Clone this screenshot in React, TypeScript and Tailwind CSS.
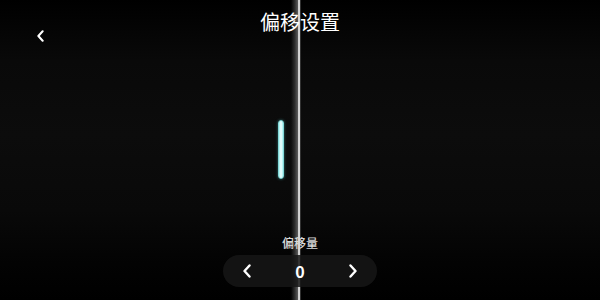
import React from "react";

const Chevron = ({ dir, className }: { dir: "left" | "right"; className?: string }) => (
  <svg
    viewBox="0 0 10 14"
    className={className}
    fill="none"
    stroke="currentColor"
    strokeWidth={2.4}
    strokeLinecap="round"
    strokeLinejoin="round"
  >
    {dir === "left" ? <path d="M7.5 1.5 L2.5 7 L7.5 12.5" /> : <path d="M2.5 1.5 L7.5 7 L2.5 12.5" />}
  </svg>
);

export default function App() {
  return (
    <div
      className="relative w-[600px] h-[300px] overflow-hidden flex flex-col bg-[linear-gradient(to_bottom,#000000_0%,#090909_20%,#0c0c0c_45%,#090909_70%,#030303_88%,#000000_100%)] text-white"
      style={{ fontFamily: '"Noto Sans CJK SC", "Noto Sans", Roboto, sans-serif' }}
    >
      {/* center guide line */}
      <div className="absolute left-[291px] top-0 bottom-0 w-[10px] bg-[linear-gradient(to_right,transparent_0%,#2a2a2a_35%,#5a5a5a_68%,#cfcfcf_72%,#d6d6d6_88%,#1a1a1a_96%,transparent_100%)]" />

      {/* offset marker */}
      <div className="absolute left-[278px] top-[120px] w-[6px] h-[59px] rounded-full bg-[linear-gradient(to_right,#a6eeee_0%,#f2ffff_50%,#a6eeee_100%)] border border-[#7fd6d6] shadow-[0_0_3px_rgba(90,210,210,0.5)]" />

      {/* header */}
      <div className="relative grid grid-cols-[1fr_auto_1fr] items-start">
        <div className="pl-[36px] pt-[30px]">
          <Chevron dir="left" className="w-[9px] h-[12px] text-white" />
        </div>
        <div className="pt-[8px] text-[20px] leading-[28px] text-white">偏移设置</div>
        <div />
      </div>

      <div className="flex-1" />

      {/* bottom control */}
      <div className="relative flex flex-col items-center pb-[13px]">
        <div className="text-[12px] leading-[16px] font-medium text-[#d8d8d8] mb-[4px]">偏移量</div>
        <div className="w-[154px] h-[32px] rounded-full bg-[rgba(22,22,22,0.85)] flex items-center justify-between px-[19px]">
          <Chevron dir="left" className="w-[10px] h-[14px] text-white" />
          <span className="text-[16px] leading-[20px] font-semibold text-white">0</span>
          <Chevron dir="right" className="w-[10px] h-[14px] text-white" />
        </div>
      </div>
    </div>
  );
}
